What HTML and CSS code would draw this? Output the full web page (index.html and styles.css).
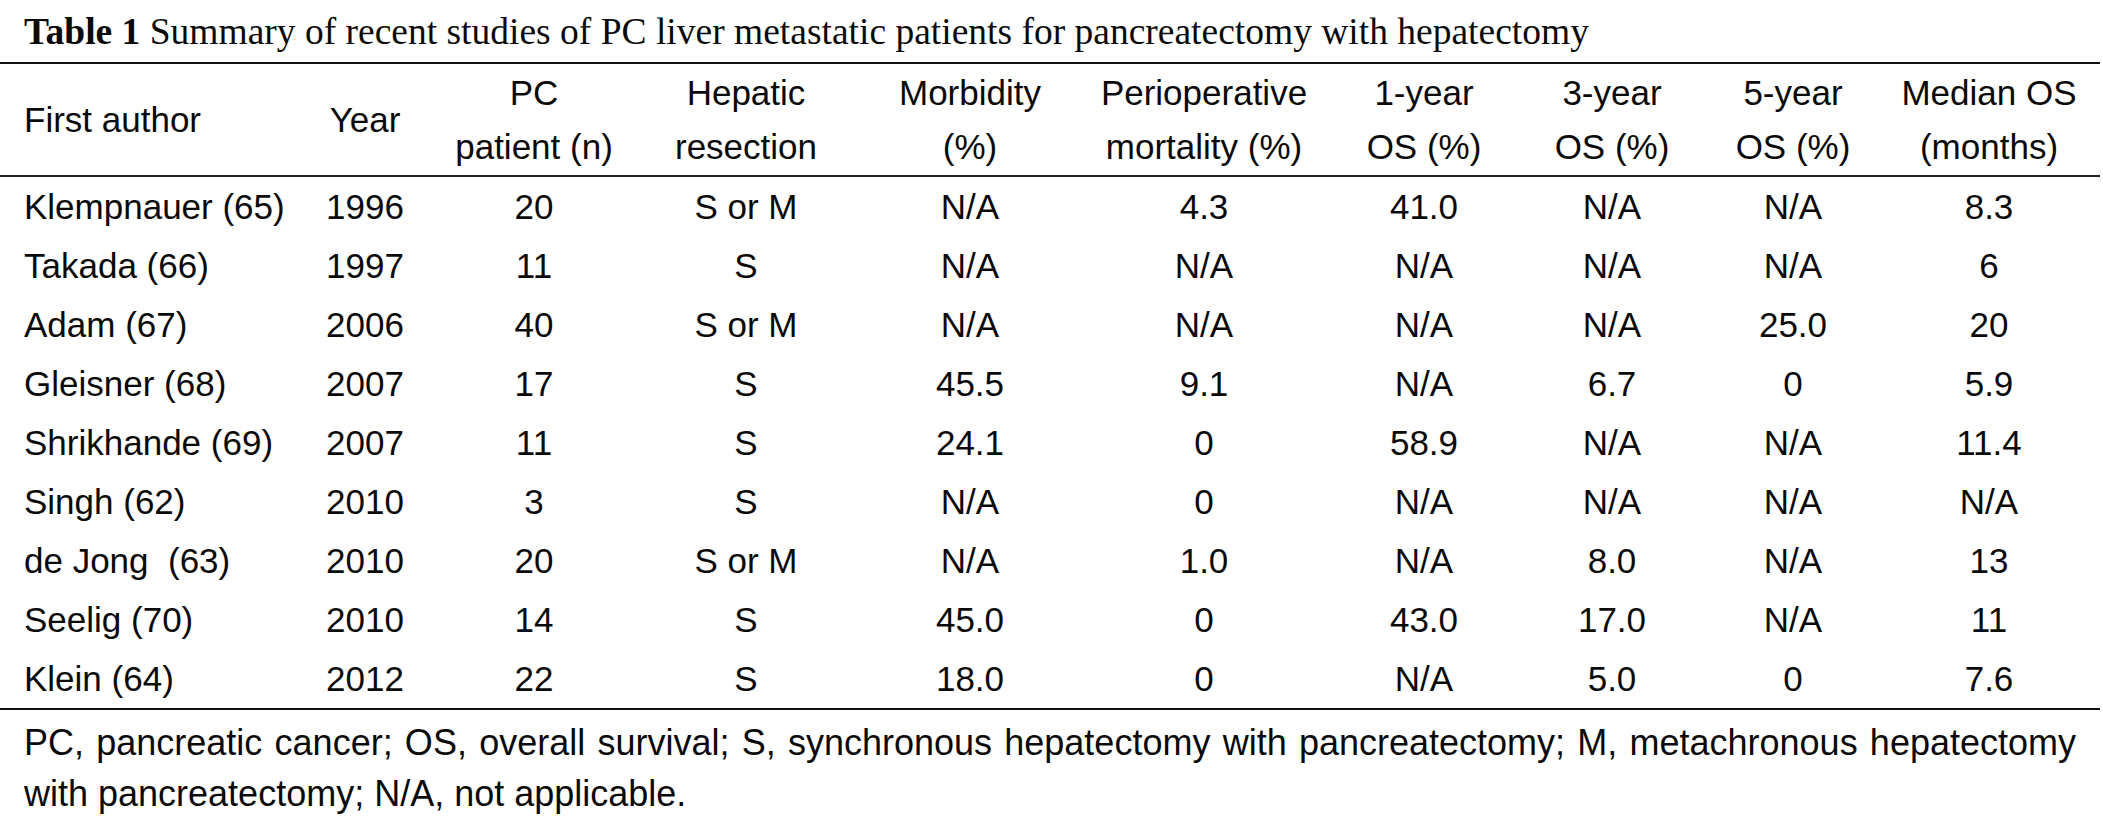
FILE: index.html
```html
<!DOCTYPE html>
<html>
<head>
<meta charset="utf-8">
<link rel="stylesheet" href="styles.css">
</head>
<body>
<div class="page">
  <div class="caption"><b>Table 1</b> Summary of recent studies of PC liver metastatic patients for pancreatectomy with hepatectomy</div>
  <table class="data">
    <colgroup>
      <col class="c1"><col class="c2"><col class="c3"><col class="c4"><col class="c5">
      <col class="c6"><col class="c7"><col class="c8"><col class="c9"><col class="c10">
    </colgroup>
    <thead>
      <tr>
        <th class="left">First author</th>
        <th>Year</th>
        <th>PC<br>patient (n)</th>
        <th>Hepatic<br>resection</th>
        <th>Morbidity<br>(%)</th>
        <th>Perioperative<br>mortality (%)</th>
        <th>1-year<br>OS (%)</th>
        <th>3-year<br>OS (%)</th>
        <th>5-year<br>OS (%)</th>
        <th>Median OS<br>(months)</th>
      </tr>
    </thead>
    <tbody>
      <tr><td class="left">Klempnauer (65)</td><td>1996</td><td>20</td><td>S or M</td><td>N/A</td><td>4.3</td><td>41.0</td><td>N/A</td><td>N/A</td><td>8.3</td></tr>
      <tr><td class="left">Takada (66)</td><td>1997</td><td>11</td><td>S</td><td>N/A</td><td>N/A</td><td>N/A</td><td>N/A</td><td>N/A</td><td>6</td></tr>
      <tr><td class="left">Adam (67)</td><td>2006</td><td>40</td><td>S or M</td><td>N/A</td><td>N/A</td><td>N/A</td><td>N/A</td><td>25.0</td><td>20</td></tr>
      <tr><td class="left">Gleisner (68)</td><td>2007</td><td>17</td><td>S</td><td>45.5</td><td>9.1</td><td>N/A</td><td>6.7</td><td>0</td><td>5.9</td></tr>
      <tr><td class="left">Shrikhande (69)</td><td>2007</td><td>11</td><td>S</td><td>24.1</td><td>0</td><td>58.9</td><td>N/A</td><td>N/A</td><td>11.4</td></tr>
      <tr><td class="left">Singh (62)</td><td>2010</td><td>3</td><td>S</td><td>N/A</td><td>0</td><td>N/A</td><td>N/A</td><td>N/A</td><td>N/A</td></tr>
      <tr><td class="left">de Jong&nbsp; (63)</td><td>2010</td><td>20</td><td>S or M</td><td>N/A</td><td>1.0</td><td>N/A</td><td>8.0</td><td>N/A</td><td>13</td></tr>
      <tr><td class="left">Seelig (70)</td><td>2010</td><td>14</td><td>S</td><td>45.0</td><td>0</td><td>43.0</td><td>17.0</td><td>N/A</td><td>11</td></tr>
      <tr><td class="left">Klein (64)</td><td>2012</td><td>22</td><td>S</td><td>18.0</td><td>0</td><td>N/A</td><td>5.0</td><td>0</td><td>7.6</td></tr>
    </tbody>
  </table>
  <p class="note">PC, pancreatic cancer; OS, overall survival; S, synchronous hepatectomy with pancreatectomy; M, metachronous hepatectomy with pancreatectomy; N/A, not applicable.</p>
</div>
</body>
</html>
```

FILE: styles.css
```css
html, body {
  margin: 0;
  padding: 0;
  background: #ffffff;
}

.page {
  width: 2100px;
  color: #0a0a0a;
}

.caption {
  font-family: "Liberation Serif", "Times New Roman", serif;
  font-size: 37.5px;
  height: 62px;
  line-height: 60px;
  padding: 2px 0 0 24px;
  box-sizing: border-box;
  white-space: nowrap;
}

.caption b {
  font-weight: bold;
}

.data {
  width: 2100px;
  table-layout: fixed;
  border-collapse: collapse;
  font-family: "Liberation Sans", Arial, sans-serif;
  font-size: 35px;
}

.c1 { width: 290px; }
.c2 { width: 150px; }
.c3 { width: 188px; }
.c4 { width: 236px; }
.c5 { width: 212px; }
.c6 { width: 256px; }
.c7 { width: 184px; }
.c8 { width: 192px; }
.c9 { width: 170px; }
.c10 { width: 222px; }

.data thead tr {
  border-top: 2px solid #111;
  border-bottom: 2px solid #222;
}

.data th {
  font-weight: normal;
  text-align: center;
  line-height: 54px;
  padding: 2px 0 1px;
  white-space: nowrap;
}

.data td {
  text-align: center;
  height: 59px;
  line-height: 59px;
  padding: 0;
  white-space: nowrap;
}

.data tbody tr:last-child {
  border-bottom: 2px solid #111;
}

.data .left {
  text-align: left;
  padding-left: 24px;
}

.note {
  margin: 0;
  padding: 7px 24px 0 24px;
  font-family: "Liberation Sans", Arial, sans-serif;
  font-size: 36px;
  line-height: 51px;
  text-align: justify;
}
```
